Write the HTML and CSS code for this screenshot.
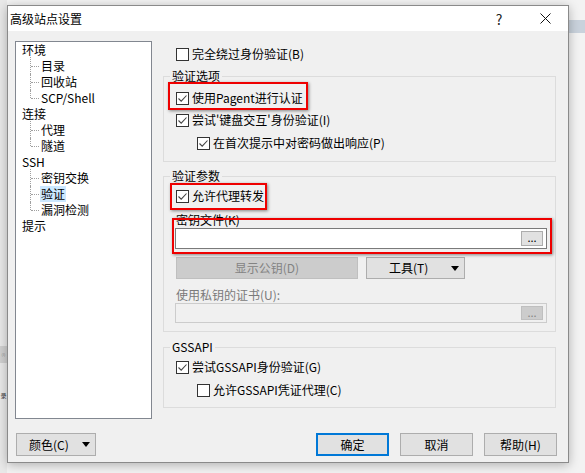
FILE: index.html
```html
<!DOCTYPE html>
<html lang="zh-CN">
<head>
<meta charset="utf-8">
<title>高级站点设置</title>
<link rel="stylesheet" href="styles.css">
</head>
<body>
<div class="desk-left"><span class="desk-btn">(I)</span><span class="desk-char">录</span></div>
<div class="desk-band"></div>

<div class="dialog">
  <div class="titlebar">
    <span class="title">高级站点设置</span>
    <span class="tb-btn help">?</span>
    <span class="tb-btn close"><svg width="11" height="11" viewBox="0 0 11 11"><path d="M0.5 0.5L10.5 10.5M10.5 0.5L0.5 10.5" stroke="#111" stroke-width="1" fill="none"/></svg></span>
  </div>
  <div class="client">
    <div class="main">
      <div class="tree">
        <div class="node">环境</div>
        <div class="children">
          <div class="leaf">目录</div>
          <div class="leaf">回收站</div>
          <div class="leaf">SCP/Shell</div>
        </div>
        <div class="node">连接</div>
        <div class="children">
          <div class="leaf">代理</div>
          <div class="leaf">隧道</div>
        </div>
        <div class="node">SSH</div>
        <div class="children">
          <div class="leaf">密钥交换</div>
          <div class="leaf"><span class="sel">验证</span></div>
          <div class="leaf">漏洞检测</div>
        </div>
        <div class="node">提示</div>
      </div>

      <div class="panel">
        <div class="row top-row"><span class="cb"></span><span>完全绕过身份验证(B)</span></div>

        <fieldset class="group g1">
          <legend>验证选项</legend>
          <div class="row r1"><span class="cb on"><svg viewBox="0 0 11 11"><path d="M1.5 5.5L4.2 8.2L9.5 2.5" stroke="#444" stroke-width="1.1" fill="none"/></svg></span><span>使用Pagent进行认证</span></div>
          <div class="row r2"><span class="cb on"><svg viewBox="0 0 11 11"><path d="M1.5 5.5L4.2 8.2L9.5 2.5" stroke="#444" stroke-width="1.1" fill="none"/></svg></span><span>尝试'键盘交互'身份验证(I)</span></div>
          <div class="row r3 indent"><span class="cb on"><svg viewBox="0 0 11 11"><path d="M1.5 5.5L4.2 8.2L9.5 2.5" stroke="#444" stroke-width="1.1" fill="none"/></svg></span><span>在首次提示中对密码做出响应(P)</span></div>
        </fieldset>

        <fieldset class="group g2">
          <legend>验证参数</legend>
          <div class="row r4"><span class="cb on"><svg viewBox="0 0 11 11"><path d="M1.5 5.5L4.2 8.2L9.5 2.5" stroke="#444" stroke-width="1.1" fill="none"/></svg></span><span>允许代理转发</span></div>
          <div class="label key-label">密钥文件(K)</div>
          <div class="input"><span class="dots">...</span></div>
          <div class="btn-row">
            <span class="btn disabled show-key">显示公钥(D)</span>
            <span class="btn tools">工具(T)<span class="arrow"></span></span>
          </div>
          <div class="label dim cert-label">使用私钥的证书(U):</div>
          <div class="input disabled-input"><span class="dots dots-dis">...</span></div>
        </fieldset>

        <fieldset class="group g3">
          <legend>GSSAPI</legend>
          <div class="row r5"><span class="cb on"><svg viewBox="0 0 11 11"><path d="M1.5 5.5L4.2 8.2L9.5 2.5" stroke="#444" stroke-width="1.1" fill="none"/></svg></span><span>尝试GSSAPI身份验证(G)</span></div>
          <div class="row r6 indent"><span class="cb"></span><span>允许GSSAPI凭证代理(C)</span></div>
        </fieldset>
      </div>
    </div>

    <div class="footer">
      <span class="btn color-btn">颜色(C)<span class="arrow"></span></span>
      <div class="actions">
        <span class="btn default">确定</span>
        <span class="btn">取消</span>
        <span class="btn">帮助(H)</span>
      </div>
    </div>
  </div>
</div>

<div class="mark mark1"></div>
<div class="mark mark2"></div>
<div class="mark mark3"></div>
</body>
</html>
```

FILE: styles.css
```css
* { box-sizing: border-box; }
html, body { margin: 0; padding: 0; }
body {
  width: 585px;
  height: 473px;
  overflow: hidden;
  position: relative;
  background: #f3f3f3;
  font-family: "Noto Sans CJK SC", "Microsoft YaHei", sans-serif;
  font-size: 12px;
  line-height: 16px;
  color: #000;
}

/* background desktop bits */
.desk-left {
  position: absolute;
  left: 0; top: 0;
  width: 7px; height: 473px;
  background: #e9e9e9;
}
.desk-btn {
  position: absolute;
  left: 0; top: 346px;
  width: 7px; height: 17px;
  background: #d0d0d0;
  color: #8a8a8a;
  font-size: 4px;
  line-height: 17px;
  text-align: center;
}
.desk-char {
  position: absolute;
  left: 0; top: 392px;
  width: 7px;
  font-size: 6px;
  line-height: 8px;
  color: #333;
  text-align: center;
}
.desk-band {
  position: absolute;
  left: 569px; top: 20px;
  width: 16px; height: 13px;
  background: #c9d2dc;
}

.dialog {
  position: absolute;
  left: 7px; top: 5px;
  width: 562px; height: 458px;
  border: 1px solid #8a8a8a;
  background: #f0f0f0;
  box-shadow: 0 2px 10px rgba(0,0,0,0.28);
  display: flex;
  flex-direction: column;
}

.titlebar {
  height: 25px;
  background: #fff;
  display: flex;
  align-items: center;
  padding-left: 2px;
  flex: none;
}
.title { font-size: 12px; }
.tb-btn {
  width: 46px;
  height: 25px;
  display: flex;
  align-items: center;
  justify-content: center;
}
.help { margin-left: auto; font-size: 14px; color: #222; }

.client {
  flex: 1;
  padding: 10px 11px 0 7px;
  display: flex;
  flex-direction: column;
}
.main {
  display: flex;
  gap: 11px;
  align-items: flex-start;
}

/* tree */
.tree {
  width: 137px;
  height: 378px;
  background: #fff;
  border: 1px solid #828790;
  padding: 0 0 0 6px;
}
.node { height: 16px; line-height: 16px; }
.leaf {
  position: relative;
  height: 16px;
  line-height: 16px;
  padding-left: 19px;
}
.leaf::before {
  content: "";
  position: absolute;
  left: 8px; top: 0;
  height: 16px;
  border-left: 1px dotted #a0a0a0;
}
.leaf:first-child::before { top: -1px; height: 17px; }
.leaf:last-child::before { height: 8px; }
.leaf::after {
  content: "";
  position: absolute;
  left: 9px; top: 8px;
  width: 8px;
  border-top: 1px dotted #a0a0a0;
}
.sel {
  background: #cce8ff;
  padding: 0 1px;
  margin-left: -1px;
  display: inline-block;
  height: 16px;
}

/* right panel */
.panel {
  width: 393px;
  display: flex;
  flex-direction: column;
}
.row {
  height: 18px;
  display: flex;
  align-items: center;
  gap: 3px;
}
.top-row { margin-top: 4px; padding-left: 13px; }
.indent { padding-left: 21px; }

.cb {
  width: 13px;
  height: 13px;
  border: 1px solid #333;
  background: #fff;
  flex: none;
  display: flex;
  align-items: center;
  justify-content: center;
}
.cb svg { width: 11px; height: 11px; display: block; }

.group {
  margin: 0;
  border: 1px solid #dcdcdc;
  padding: 0 8px 0 12px;
  min-width: 0;
}
.group legend {
  padding: 0 2px;
  margin-left: -6px;
  height: 16px;
  line-height: 16px;
}
.g1 { margin-top: 5px; padding-bottom: 9px; }
.r1 { margin-top: 5px; }
.r2 { margin-top: 4px; }
.r3 { margin-top: 5px; }

.g2 { margin-top: 6px; padding-bottom: 8px; }
.r4 { margin-top: 3px; }
.label { height: 16px; line-height: 16px; }
.key-label { margin-top: 7px; }
.dim { color: #7a7a7a; }
.input {
  margin-left: -1px;
  height: 21px;
  border: 1px solid #7a7a7a;
  background: #fff;
  display: flex;
  align-items: center;
  justify-content: flex-end;
  padding-right: 3px;
}
.dots {
  width: 22px;
  height: 15px;
  background: #e1e1e1;
  border: 1px solid #adadad;
  font-size: 11px;
  line-height: 10px;
  text-align: center;
  color: #000;
}
.btn-row {
  margin-top: 8px;
  display: flex;
  gap: 8px;
}
.btn {
  height: 23px;
  border: 1px solid #adadad;
  background: #e1e1e1;
  display: flex;
  align-items: center;
  justify-content: center;
  flex: none;
}
.show-key { width: 182px; height: 22px; }
.disabled { background: #cccccc; border-color: #bfbfbf; color: #838383; }
.tools {
  width: 99px;
  height: 22px;
  justify-content: flex-start;
  padding: 0 5px 0 22px;
}
.arrow {
  margin-left: auto;
  width: 0; height: 0;
  border-left: 4.5px solid transparent;
  border-right: 4.5px solid transparent;
  border-top: 5px solid #000;
}
.cert-label { margin-top: 8px; }
.disabled-input {
  height: 20px;
  border-color: #cccccc;
  background: #f0f0f0;
}
.dots-dis {
  background: #cccccc;
  border-color: #bfbfbf;
  color: #838383;
  height: 14px;
}

.g3 { margin-top: 7px; padding-bottom: 8px; }
.r5 { margin-top: 3px; }
.r6 { margin-top: 5px; }

/* footer */
.footer {
  margin-top: 14px;
  display: flex;
  padding-left: 1px;
}
.color-btn {
  width: 80px;
  justify-content: flex-start;
  padding: 0 5px 0 12px;
}
.actions {
  margin-left: auto;
  display: flex;
  gap: 11px;
}
.actions .btn { width: 73px; }
.btn.default { border: 2px solid #0078d7; }

/* red annotation boxes */
.mark {
  position: absolute;
  border: 2px solid #ee0000;
  box-shadow: 1px 1px 3px rgba(0,0,0,0.45);
}
.mark1 { left: 168px; top: 82px; width: 140px; height: 28px; }
.mark2 { left: 170px; top: 183px; width: 97px; height: 27px; }
.mark3 { left: 172px; top: 218px; width: 380px; height: 36px; }
```
